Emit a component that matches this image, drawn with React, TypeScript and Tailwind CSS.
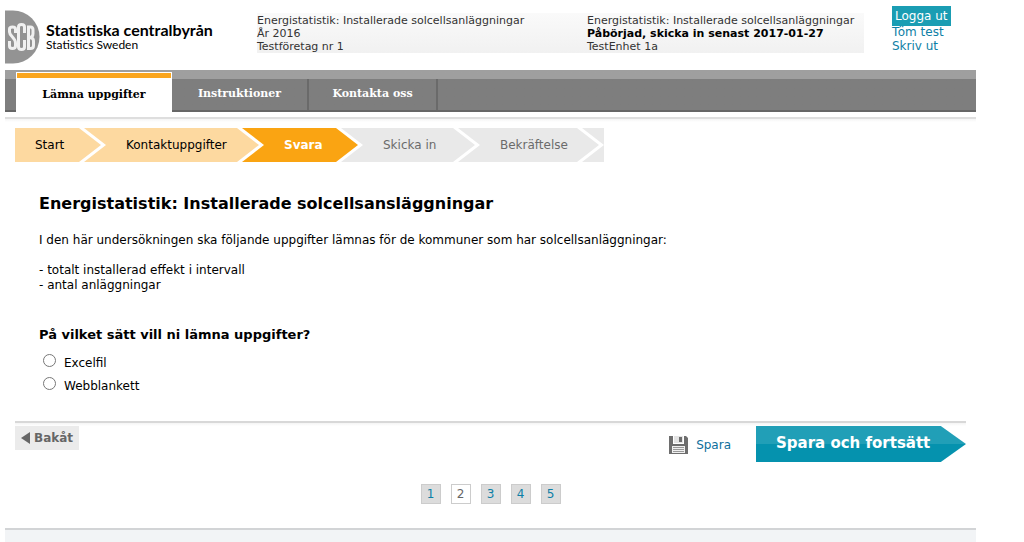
import React from 'react';

const tabs = [
    { label: 'Lämna uppgifter', active: true, width: 'w-[156px]' },
    { label: 'Instruktioner', active: false, width: 'w-[137px]' },
    { label: 'Kontakta oss', active: false, width: 'w-[129px]' }
];

const steps = [
    { label: 'Start', box: 'w-16 bg-[#fdd9a0] text-black', fill: '#fdd9a0', next: '#fdd9a0' },
    { label: 'Kontaktuppgifter', box: 'w-[131px] bg-[#fdd9a0] text-black', fill: '#fdd9a0', next: '#faa412' },
    { label: 'Svara', box: 'w-[72px] bg-[#faa412] text-white font-bold', fill: '#faa412', next: '#e9e9e9' },
    { label: 'Skicka in', box: 'w-[90px] bg-[#e9e9e9] text-[#6b6b6b]', fill: '#e9e9e9', next: '#e9e9e9' },
    { label: 'Bekräftelse', box: 'w-[97px] bg-[#e9e9e9] text-[#6b6b6b]', fill: '#e9e9e9', next: '#e9e9e9' }
];

const pages = [1, 2, 3, 4, 5];
const currentPage = 2;

const Logo = () => (
    <svg width="35" height="54" viewBox="0 0 35 54" className="shrink-0" aria-hidden="true">
        <path d="M0 0.5H8A26.5 26.5 0 0 1 8 53.5H0Z" fill="#939393" />
        <g fill="none" stroke="#f0f0f0" strokeWidth="3">
            <path d="M10.5 23V19Q10.5 17 7.5 17T4.5 19V22C4.5 26 10.5 28 10.5 33V36Q10.5 38.5 7.5 38.5T4.5 36V31" />
            <path d="M19.5 23V17Q19.5 14.5 16.5 14.5T13.5 17V37Q13.5 39.5 16.5 39.5T19.5 37V30" />
            <path d="M23.5 17V38.5H25.5Q28.5 38.5 28.5 35.5V31Q28.5 27.5 24 27.5Q28 27.5 28 23.5V20Q28 17 25.5 17Z" />
        </g>
    </svg>
);

const Chevron = ({ fill, next }: { fill: string; next: string }) => (
    <svg width="27" height="34" viewBox="0 0 27 34" className="shrink-0" aria-hidden="true">
        <rect width="27" height="34" fill={next} />
        <path d="M0 0H5L27 17L5 34H0Z" fill="#fff" />
        <path d="M0 0L22 17L0 34Z" fill={fill} />
    </svg>
);

const DiskIcon = () => (
    <svg width="19" height="18" viewBox="0 0 19 18" aria-hidden="true">
        <path d="M0 0H4V8H15V0H17L19 2V18H0Z" fill="#6e6e6e" />
        <path d="M5 0H14V7H5Z" fill="#e4e4e4" />
        <path d="M10 1H13V6H10Z" fill="#6e6e6e" />
        <path d="M3 10H16V17H3Z" fill="#efefef" />
        <path d="M4 11.5H15M4 13.5H15M4 15.5H15" stroke="#999" />
    </svg>
);

export default function App() {
    return (
        <div className="bg-white pl-[5px] pr-12 font-['DejaVu_Sans',sans-serif] text-xs text-black">
            <header className="flex h-[70px] items-start">
                <div className="flex w-[252px] shrink-0 pt-[10px]">
                    <Logo />
                    <div className="pl-[6px] pt-3 font-['Lato',sans-serif]">
                        <div className="text-base font-bold leading-4 whitespace-nowrap">Statistiska centralbyrån</div>
                        <div className="text-xs font-normal leading-[14px]">Statistics Sweden</div>
                    </div>
                </div>
                <div className="mt-[13px] flex w-[607px] shrink-0 bg-linear-to-b from-[#fafafa] to-[#f1f1f1] pt-px text-[11px] leading-[13px] text-[#333]">
                    <div className="w-[330px]">
                        <p>Energistatistik: Installerade solcellsanläggningar</p>
                        <p>År 2016</p>
                        <p>Testföretag nr 1</p>
                    </div>
                    <div className="whitespace-nowrap">
                        <p>Energistatistik: Installerade solcellsanläggningar</p>
                        <p className="font-bold text-black">Påbörjad, skicka in senast 2017-01-27</p>
                        <p>TestEnhet 1a</p>
                    </div>
                </div>
                <div className="flex flex-col items-start pl-7 pt-[6px] leading-[14px] text-[#0e7fa6]">
                    <button className="bg-[#1a9db3] px-[3px] py-[3px] text-white">Logga ut</button>
                    <a href="#tom" className="-mt-px">Töm test</a>
                    <a href="#skriv">Skriv ut</a>
                </div>
            </header>

            <nav className="flex h-[42px] border-b-2 border-[#666] bg-linear-to-b from-[#9f9f9f] from-[9px] to-[#7e7e7e] to-[9px] pl-[11px] font-['DejaVu_Serif',serif] text-[11px] leading-4 font-bold">
                {tabs.map((tab) =>
                    tab.active ? (
                        <a key={tab.label} href="#tab" className={`mt-[2px] -mb-[2px] flex flex-col bg-white px-px pt-px ${tab.width}`}>
                            <span className="h-[5px] bg-[#faa61f]"></span>
                            <span className="pt-[9px] text-center">{tab.label}</span>
                        </a>
                    ) : (
                        <a key={tab.label} href="#tab" className={`mt-[9px] border-r-2 border-[#6a6a6a] pt-[7px] text-center text-white ${tab.width}`}>
                            {tab.label}
                        </a>
                    )
                )}
            </nav>
            <div className="mt-[5px] h-[5px] border-t-2 border-[#dedede] bg-linear-to-b from-[#f4f4f4] to-white"></div>

            <main className="px-[10px] pt-[6px]">
                <ol className="flex leading-[34px]">
                    {steps.map((step) => (
                        <li key={step.label} className="flex">
                            <span className={`pl-5 ${step.box}`}>{step.label}</span>
                            <Chevron fill={step.fill} next={step.next} />
                        </li>
                    ))}
                </ol>

                <section className="pl-6">
                    <h1 className="pt-8 text-base font-bold leading-5">Energistatistik: Installerade solcellsansläggningar</h1>
                    <p className="pt-[19px] leading-[15px]">
                        I den här undersökningen ska följande uppgifter lämnas för de kommuner som har solcellsanläggningar:
                    </p>
                    <p className="pt-[15px] leading-[15px]">
                        - totalt installerad effekt i intervall
                        <br />- antal anläggningar
                    </p>
                    <fieldset className="pb-[27px]">
                        <legend className="pt-8 text-[13px] font-bold leading-5">På vilket sätt vill ni lämna uppgifter?</legend>
                        <div className="flex flex-col gap-[6px] pl-1 pt-[9px]">
                            {['Excelfil', 'Webblankett'].map((option) => (
                                <label key={option} className="flex items-start gap-2 leading-[15px]">
                                    <input
                                        type="radio"
                                        name="method"
                                        className="h-[13px] w-[13px] appearance-none rounded-full border border-[#777] bg-white checked:border-4"
                                    />
                                    <span className="pt-[2px]">{option}</span>
                                </label>
                            ))}
                        </div>
                    </fieldset>
                </section>

                <div className="h-[5px] border-t-2 border-[#d8d8d8] bg-linear-to-b from-[#f4f4f4] to-white"></div>
                <div className="flex items-start">
                    <button className="flex h-6 items-center gap-1 bg-[#ebebeb] px-[6px] font-bold text-[#666]">
                        <svg width="9" height="12" viewBox="0 0 9 12" aria-hidden="true">
                            <path d="M9 0V12L0 6Z" fill="#666" />
                        </svg>
                        Bakåt
                    </button>
                    <button className="ml-auto mt-[10px] flex items-center gap-2 pr-[25px] text-[#0e6f9c]">
                        <DiskIcon />
                        Spara
                    </button>
                    <button className="h-9 w-[210px] bg-linear-to-b from-[#219fb7] from-50% to-[#0592ae] to-50% pl-5 text-left text-[15px] font-bold text-white [clip-path:polygon(0_0,88%_0,100%_50%,88%_100%,0_100%)]">
                        Spara och fortsätt
                    </button>
                </div>
            </main>

            <div className="flex justify-center gap-[10px] pb-6 pt-[22px]">
                {pages.map((page) => (
                    <a
                        key={page}
                        href="#page"
                        className={`w-5 border border-[#ccc] text-center leading-[18px] ${page === currentPage ? 'bg-white text-[#666]' : 'bg-[#dcdcdc] text-[#0e7fa6]'}`}
                    >
                        {page}
                    </a>
                ))}
            </div>
            <footer className="h-[14px] border-t-2 border-[#d2d4d6] bg-[#f2f4f6]"></footer>
        </div>
    );
}
